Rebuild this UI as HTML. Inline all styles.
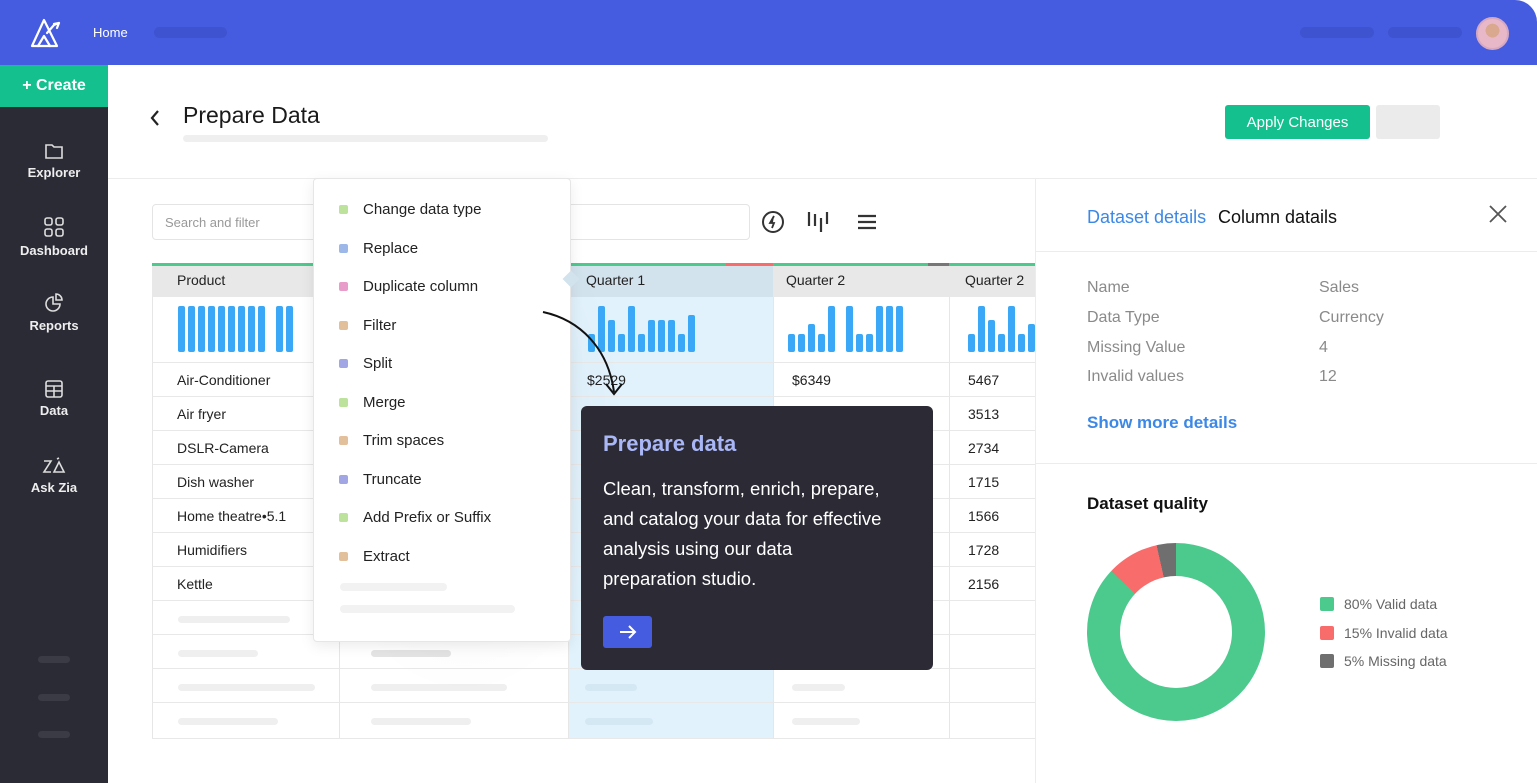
<!DOCTYPE html>
<html><head><meta charset="utf-8"><style>
*{box-sizing:border-box;margin:0;padding:0}
body{width:1537px;height:783px;overflow:hidden;background:#fff;font-family:"Liberation Sans",sans-serif;position:relative;color:#222}
.a{position:absolute}
.top{left:0;top:0;width:1537px;height:65px;background:#465ce0;border-radius:0 22px 0 0}
.pill{position:absolute;height:11px;border-radius:6px}
.side{left:0;top:65px;width:108px;height:718px;background:#2b2b35}
.nav{position:absolute;left:0;width:108px;text-align:center;color:#eee;font-size:13px;font-weight:bold}
.nav svg{display:block;margin:0 auto 5px}
.g{background:#efefef;border-radius:5px;position:absolute;height:8px}
.row{position:absolute;left:152px;width:883px;height:34px;border-bottom:1px solid #e8e8e8;font-size:14px}
.row span{position:absolute;top:9px}
.vl{position:absolute;top:297px;width:1px;height:442px;background:#e6e6e6}
.bars{position:absolute;display:flex;align-items:flex-end;gap:3px;height:46px}
.bars i{display:block;width:7px;background:#3aa8f7;border-radius:2px}
.mi{position:absolute;left:340px;font-size:15px;color:#222}
.mi b{position:absolute;left:-1px;top:4px;width:9px;height:9px;border-radius:2px}
.mi span{position:absolute;left:23px;white-space:nowrap}
.dl{position:absolute;font-size:16px;color:#8a8a8a}
</style></head><body>
<div class="a top"></div>
<svg class="a" style="left:30px;top:17px" width="36" height="32" viewBox="0 0 36 32" fill="none" stroke="#fff" stroke-width="2.2" stroke-linejoin="round" stroke-linecap="round"><path d="M2 29 L14 3 L27 29 Z"/><path d="M8 29 L14 19 L20 29"/><path d="M17 16 L24 8 L29 6 M29 6 L27 11 M29 6 L24 7"/></svg>
<div class="a" style="left:93px;top:25px;color:#fff;font-size:13px">Home</div>
<div class="pill" style="left:154px;top:27px;width:73px;background:#3e53d0"></div>
<div class="pill" style="left:1300px;top:27px;width:74px;background:#3e53d0"></div>
<div class="pill" style="left:1388px;top:27px;width:74px;background:#3e53d0"></div>
<div class="a" style="left:1476px;top:17px;width:33px;height:33px;border-radius:50%;background:radial-gradient(circle at 50% 40%,#d9a88f 0 30%,#e8b8c8 31%);border:2px solid #d6a9c0"></div>
<div class="a side"></div>
<div class="a" style="left:0;top:65px;width:108px;height:42px;background:#14c08e;color:#fff;font-size:16px;font-weight:bold;text-align:center;line-height:42px">+ Create</div>
<div class="nav" style="top:142px"><svg width="20" height="18" viewBox="0 0 20 18" fill="none" stroke="#ddd" stroke-width="1.6"><path d="M2 3h6l2 2h8v11H2z"/></svg>Explorer</div>
<div class="nav" style="top:216px"><svg width="22" height="22" viewBox="0 0 22 22" fill="none" stroke="#ddd" stroke-width="1.6"><rect x="2" y="2" width="7" height="7" rx="2"/><rect x="13" y="2" width="7" height="7" rx="2"/><rect x="2" y="13" width="7" height="7" rx="2"/><rect x="13" y="13" width="7" height="7" rx="2"/></svg>Dashboard</div>
<div class="nav" style="top:293px"><svg width="20" height="20" viewBox="0 0 20 20" fill="none" stroke="#ddd" stroke-width="1.6"><path d="M9 4a7 7 0 1 0 7 7H9z"/><path d="M12 1a6 6 0 0 1 6 6h-6z"/></svg>Reports</div>
<div class="nav" style="top:380px"><svg width="18" height="18" viewBox="0 0 18 18" fill="none" stroke="#ddd" stroke-width="1.6"><rect x="1" y="1" width="16" height="16" rx="2"/><path d="M1 6h16M1 11h16M9 6v11"/></svg>Data</div>
<div class="nav" style="top:457px"><svg width="24" height="18" viewBox="0 0 24 18" fill="none" stroke="#ddd" stroke-width="1.6"><path d="M2 4h7L2 15h7M12 15l5-10 5 10zM15 2l2 -1"/></svg>Ask Zia</div>
<div class="pill" style="left:38px;top:656px;width:32px;height:7px;background:#3b3b46"></div>
<div class="pill" style="left:38px;top:694px;width:32px;height:7px;background:#3b3b46"></div>
<div class="pill" style="left:38px;top:731px;width:32px;height:7px;background:#3b3b46"></div>

<svg class="a" style="left:148px;top:109px" width="14" height="18" viewBox="0 0 14 18" fill="none" stroke="#222" stroke-width="2.2"><path d="M10 2 L4 9 L10 16"/></svg>
<div class="a" style="left:183px;top:102px;font-size:23px;color:#1a1a1a">Prepare Data</div>
<div class="g" style="left:183px;top:135px;width:365px;height:7px"></div>
<div class="a" style="left:1225px;top:105px;width:145px;height:34px;background:#14c08e;border-radius:3px;color:#fff;font-size:15px;text-align:center;line-height:36px">Apply Changes</div>
<div class="a" style="left:1376px;top:105px;width:64px;height:34px;background:#ebebeb;border-radius:3px"></div>
<div class="a" style="left:108px;top:178px;width:1429px;height:1px;background:#ececec"></div>

<div class="a" style="left:152px;top:204px;width:598px;height:36px;border:1px solid #e4e4e4;border-radius:4px;font-size:13px;color:#999;padding:10px 12px">Search and filter</div>
<svg class="a" style="left:761px;top:210px" width="24" height="24" viewBox="0 0 24 24" fill="none" stroke="#333" stroke-width="2"><circle cx="12" cy="12" r="10"/><path d="M13 6 L9 13 h4 l-2 5" stroke-width="1.8" fill="#333"/></svg>
<svg class="a" style="left:806px;top:210px" width="24" height="24" viewBox="0 0 24 24" fill="none" stroke="#333" stroke-width="2.2"><path d="M3 2v14M9 4v12M15 8v14M21 2v12"/></svg>
<svg class="a" style="left:856px;top:213px" width="22" height="18" viewBox="0 0 22 18" fill="none" stroke="#333" stroke-width="2.2"><path d="M2 3h18M2 9h18M2 15h18"/></svg>

<div class="a" style="left:568px;top:263px;width:205px;height:476px;background:#e2f2fc"></div>
<div class="a" style="left:152px;top:263px;width:883px;height:3px;background:#4cc98d"></div>
<div class="a" style="left:726px;top:263px;width:47px;height:3px;background:#f96c6c"></div>
<div class="a" style="left:928px;top:263px;width:21px;height:3px;background:#777"></div>
<div class="a" style="left:152px;top:266px;width:883px;height:31px;background:#e8e8e8"></div>
<div class="a" style="left:568px;top:266px;width:205px;height:31px;background:#d3e3ee"></div>
<div class="a" style="left:177px;top:272px;font-size:14px">Product</div>
<div class="a" style="left:586px;top:272px;font-size:14px">Quarter 1</div>
<div class="a" style="left:786px;top:272px;font-size:14px">Quarter 2</div>
<div class="a" style="left:965px;top:272px;font-size:14px">Quarter 2</div>
<div class="vl" style="left:152px"></div><div class="vl" style="left:339px"></div><div class="vl" style="left:568px"></div><div class="vl" style="left:773px"></div><div class="vl" style="left:949px"></div>
<div class="a" style="left:152px;top:362px;width:883px;height:1px;background:#e8e8e8"></div>
<div class="bars" style="left:178px;top:306px"><i style="height:46px"></i><i style="height:46px"></i><i style="height:46px"></i><i style="height:46px"></i><i style="height:46px"></i><i style="height:46px"></i><i style="height:46px"></i><i style="height:46px"></i><i style="height:46px;margin-right:8px"></i><i style="height:46px"></i><i style="height:46px"></i></div>
<div class="bars" style="left:588px;top:306px"><i style="height:18px"></i><i style="height:46px"></i><i style="height:32px"></i><i style="height:18px"></i><i style="height:46px"></i><i style="height:18px"></i><i style="height:32px"></i><i style="height:32px"></i><i style="height:32px"></i><i style="height:18px"></i><i style="height:37px"></i></div>
<div class="bars" style="left:788px;top:306px"><i style="height:18px"></i><i style="height:18px"></i><i style="height:28px"></i><i style="height:18px"></i><i style="height:46px;margin-right:8px"></i><i style="height:46px"></i><i style="height:18px"></i><i style="height:18px"></i><i style="height:46px"></i><i style="height:46px"></i><i style="height:46px"></i></div>
<div class="bars" style="left:968px;top:306px"><i style="height:18px"></i><i style="height:46px"></i><i style="height:32px"></i><i style="height:18px"></i><i style="height:46px"></i><i style="height:18px"></i><i style="height:28px"></i></div>

<div class="row" style="top:363px"><span style="left:25px">Air-Conditioner</span><span style="left:435px">$2529</span><span style="left:640px">$6349</span><span style="left:816px">5467</span></div>
<div class="row" style="top:397px"><span style="left:25px">Air fryer</span><span style="left:816px">3513</span></div>
<div class="row" style="top:431px"><span style="left:25px">DSLR-Camera</span><span style="left:816px">2734</span></div>
<div class="row" style="top:465px"><span style="left:25px">Dish washer</span><span style="left:816px">1715</span></div>
<div class="row" style="top:499px"><span style="left:25px">Home theatre•5.1</span><span style="left:816px">1566</span></div>
<div class="row" style="top:533px"><span style="left:25px">Humidifiers</span><span style="left:816px">1728</span></div>
<div class="row" style="top:567px"><span style="left:25px">Kettle</span><span style="left:816px">2156</span></div>
<div class="row" style="top:601px"></div><div class="row" style="top:635px"></div><div class="row" style="top:669px"></div><div class="row" style="top:703px;height:36px"></div>
<div class="g" style="left:178px;top:616px;width:112px;height:7px"></div>
<div class="g" style="left:178px;top:650px;width:80px;height:7px"></div>
<div class="g" style="left:178px;top:684px;width:137px;height:7px"></div>
<div class="g" style="left:178px;top:718px;width:100px;height:7px"></div>
<div class="g" style="left:371px;top:650px;width:80px;height:7px;background:#e4e4e4"></div>
<div class="g" style="left:371px;top:684px;width:136px;height:7px"></div>
<div class="g" style="left:371px;top:718px;width:100px;height:7px"></div>
<div class="g" style="left:585px;top:684px;width:52px;height:7px;background:#d4e8f4"></div>
<div class="g" style="left:585px;top:718px;width:68px;height:7px;background:#d4e8f4"></div>
<div class="g" style="left:792px;top:684px;width:53px;height:7px"></div>
<div class="g" style="left:792px;top:718px;width:68px;height:7px"></div>

<div class="a" style="left:300px;top:170px;width:330px;height:530px;border-radius:60px;background:radial-gradient(ellipse at center,rgba(0,0,0,.05),rgba(0,0,0,0) 70%)"></div>
<div class="a" style="left:313px;top:178px;width:258px;height:464px;background:#fff;border:1px solid #e6e6e6;border-radius:4px;box-shadow:0 4px 14px rgba(0,0,0,.08)"></div>
<div class="a" style="left:565px;top:273px;width:12px;height:12px;background:#d3e3ee;transform:rotate(45deg)"></div>
<div class="mi" style="top:201px"><b style="background:#bde29b"></b><span>Change data type</span></div>
<div class="mi" style="top:240px"><b style="background:#9db8e8"></b><span>Replace</span></div>
<div class="mi" style="top:278px"><b style="background:#e89cc9"></b><span>Duplicate column</span></div>
<div class="mi" style="top:317px"><b style="background:#e2c09c"></b><span>Filter</span></div>
<div class="mi" style="top:355px"><b style="background:#a3a6e4"></b><span>Split</span></div>
<div class="mi" style="top:394px"><b style="background:#bde29b"></b><span>Merge</span></div>
<div class="mi" style="top:432px"><b style="background:#e2c09c"></b><span>Trim spaces</span></div>
<div class="mi" style="top:471px"><b style="background:#a3a6e4"></b><span>Truncate</span></div>
<div class="mi" style="top:509px"><b style="background:#bde29b"></b><span>Add Prefix or Suffix</span></div>
<div class="mi" style="top:548px"><b style="background:#e2c09c"></b><span>Extract</span></div>
<div class="g" style="left:340px;top:583px;width:107px;height:8px;background:#f2f2f2"></div>
<div class="g" style="left:340px;top:605px;width:175px;height:8px;background:#f2f2f2"></div>

<svg class="a" style="left:540px;top:308px" width="90" height="92" viewBox="0 0 90 92" fill="none" stroke="#111" stroke-width="2"><path d="M3 4 C40 12 68 40 74 84"/><path d="M66 76 L74 86 L82 76"/></svg>

<div class="a" style="left:581px;top:406px;width:352px;height:264px;background:#2b2a35;border-radius:6px"></div>
<div class="a" style="left:603px;top:431px;font-size:22px;font-weight:bold;color:#aab7f7">Prepare data</div>
<div class="a" style="left:603px;top:474px;font-size:18.5px;line-height:30px;color:#fff;white-space:nowrap">Clean, transform, enrich, prepare,<br>and catalog your data for effective<br>analysis using our data<br>preparation studio.</div>
<div class="a" style="left:603px;top:616px;width:49px;height:32px;background:#465ce0;border-radius:3px"></div>
<svg class="a" style="left:618px;top:624px" width="20" height="16" viewBox="0 0 20 16" fill="none" stroke="#fff" stroke-width="2"><path d="M2 8h15M11 2l6 6-6 6"/></svg>

<div class="a" style="left:1035px;top:178px;width:1px;height:605px;background:#ececec"></div>
<div class="a" style="left:1087px;top:207px;font-size:18px;color:#3c88e6">Dataset details</div>
<div class="a" style="left:1218px;top:207px;font-size:18px;color:#111">Column datails</div>
<svg class="a" style="left:1488px;top:204px" width="20" height="20" viewBox="0 0 20 20" stroke="#555" stroke-width="1.8"><path d="M2 2L18 18M18 2L2 18"/></svg>
<div class="a" style="left:1035px;top:251px;width:502px;height:1px;background:#ececec"></div>
<div class="dl" style="left:1087px;top:279px">Name</div><div class="dl" style="left:1319px;top:279px">Sales</div>
<div class="dl" style="left:1087px;top:309px">Data Type</div><div class="dl" style="left:1319px;top:309px">Currency</div>
<div class="dl" style="left:1087px;top:339px">Missing Value</div><div class="dl" style="left:1319px;top:339px">4</div>
<div class="dl" style="left:1087px;top:368px">Invalid values</div><div class="dl" style="left:1319px;top:368px">12</div>
<div class="a" style="left:1087px;top:413px;font-size:17px;font-weight:bold;color:#3c88e6">Show more details</div>
<div class="a" style="left:1035px;top:463px;width:502px;height:1px;background:#ececec"></div>
<div class="a" style="left:1087px;top:494px;font-size:17px;font-weight:bold;color:#111">Dataset quality</div>
<div class="a" style="left:1087px;top:543px;width:178px;height:178px;border-radius:50%;background:conic-gradient(#4cc98d 0 87%,#f96c6c 87% 96.5%,#6f6f6f 96.5% 100%)"></div>
<div class="a" style="left:1120px;top:576px;width:112px;height:112px;border-radius:50%;background:#fff"></div>
<div class="a" style="left:1320px;top:597px;width:14px;height:14px;border-radius:2px;background:#4cc98d"></div>
<div class="a" style="left:1344px;top:596px;font-size:14px;color:#666">80% Valid data</div>
<div class="a" style="left:1320px;top:626px;width:14px;height:14px;border-radius:2px;background:#f96c6c"></div>
<div class="a" style="left:1344px;top:625px;font-size:14px;color:#666">15% Invalid data</div>
<div class="a" style="left:1320px;top:654px;width:14px;height:14px;border-radius:2px;background:#6f6f6f"></div>
<div class="a" style="left:1344px;top:653px;font-size:14px;color:#666">5% Missing data</div>
</body></html>
